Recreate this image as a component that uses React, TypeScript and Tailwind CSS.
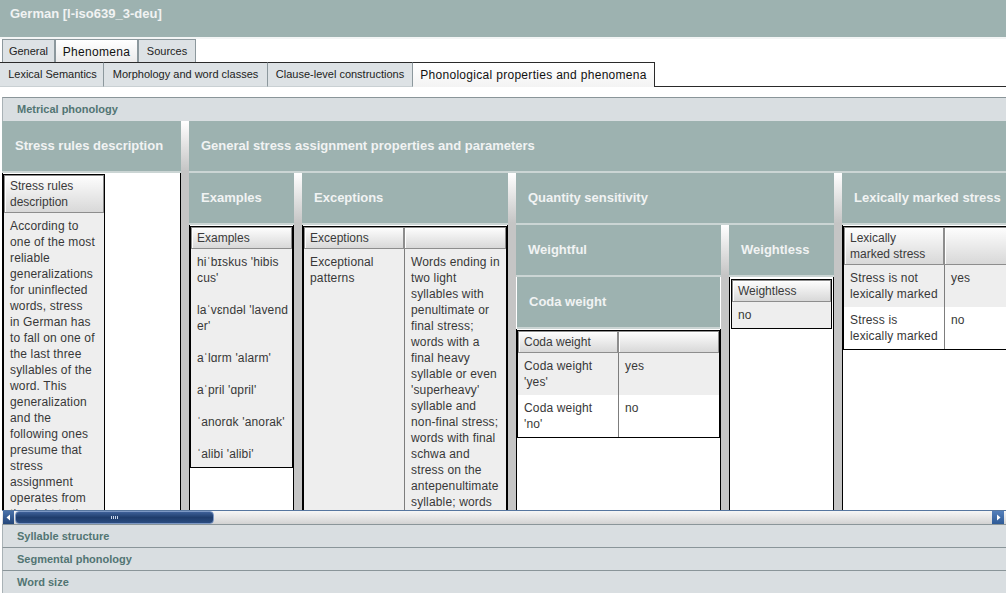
import type { ReactNode } from "react";
import clsx from "clsx";

type Lines = string[];

const stressText: Lines = [
  "According to",
  "one of the most",
  "reliable",
  "generalizations",
  "for uninflected",
  "words, stress",
  "in German has",
  "to fall on one of",
  "the last three",
  "syllables of the",
  "word. This",
  "generalization",
  "and the",
  "following ones",
  "presume that",
  "stress",
  "assignment",
  "operates from",
  "the right to the",
];

const examples: Lines = [
  "hiˈbɪskus 'hibis",
  "cus'",
  "",
  "laˈvɛndəl 'lavend",
  "er'",
  "",
  "aˈlɑrm 'alarm'",
  "",
  "aˈpril 'ɑpril'",
  "",
  "ˈanorɑk 'anorak'",
  "",
  "ˈalibi 'alibi'",
];

const exceptionText: Lines = [
  "Words ending in",
  "two light",
  "syllables with",
  "penultimate or",
  "final stress;",
  "words with a",
  "final heavy",
  "syllable or even",
  "'superheavy'",
  "syllable and",
  "non-final stress;",
  "words with final",
  "schwa and",
  "stress on the",
  "antepenultimate",
  "syllable; words",
];

const TextLines = ({ lines }: { lines: Lines }) => (
  <>
    {lines.map((l, i) => (
      <div key={i} className="h-[16px] leading-[16px] whitespace-nowrap">
        {l || "\u00a0"}
      </div>
    ))}
  </>
);

const TealHead = ({ children, className }: { children: ReactNode; className?: string }) => (
  <div
    className={clsx(
      "h-[52px] shrink-0 bg-[#9db2b0] border-b-2 border-[#cbd5d4] flex items-center pl-[12px] text-[13px] font-bold text-[#f1f3f3] whitespace-nowrap overflow-hidden",
      className
    )}
  >
    {children}
  </div>
);

const Splitter = () => (
  <div className="w-[8px] shrink-0 bg-[linear-gradient(to_bottom,#ffffff,#c5c5c5_50px,#c5c5c5)]" />
);

const Panel = ({ children }: { children?: ReactNode }) => (
  <div className="flex-1 min-h-0 overflow-hidden border-x border-black bg-white pt-[1px]">
    {children}
  </div>
);

const HeadCell = ({ lines, className }: { lines: Lines; className?: string }) => (
  <div
    className={clsx(
      "border border-[#8d8d8d] bg-[linear-gradient(#fdfdfd,#d8d8d8)] shadow-[inset_1px_1px_0_#ffffff] px-[5px] py-[2px] text-[#3a3a3a]",
      className
    )}
  >
    <TextLines lines={lines} />
  </div>
);

const BodyCell = ({ lines, className }: { lines: Lines; className?: string }) => (
  <div className={clsx("px-[6px] pt-[5px] pb-[5px] text-[#383838] tracking-[0.15px]", className)}>
    <TextLines lines={lines} />
  </div>
);

// two column table, first column 100px
const PairTable = ({ head, rows }: { head: Lines; rows: [Lines, Lines][] }) => (
  <div className="border border-black bg-white">
    <div className="grid grid-cols-[100px_1fr]">
      <HeadCell lines={head} />
      <HeadCell lines={[""]} />
    </div>
    {rows.map(([a, b], i) => (
      <div
        key={i}
        className={clsx("grid grid-cols-[100px_1fr]", i % 2 === 0 ? "bg-[#eeeeee]" : "bg-white")}
      >
        <BodyCell lines={a} />
        <BodyCell lines={b} className="border-l border-[#7d7d7d]" />
      </div>
    ))}
  </div>
);

const SingleTable = ({ head, body, className }: { head: Lines; body: Lines; className?: string }) => (
  <div className={clsx("border border-black bg-[#eeeeee]", className)}>
    <HeadCell lines={head} />
    <BodyCell lines={body} />
  </div>
);

const Tab = ({ children, selected, className }: { children: ReactNode; selected?: boolean; className: string }) => (
  <div
    className={clsx(
      "h-full flex items-center justify-center whitespace-nowrap border border-b-0 border-[#8c989d]",
      selected
        ? "bg-[linear-gradient(#ffffff,#ececec)] text-[12px] tracking-[0.3px] text-[#111] pt-[2px]"
        : "bg-[#dde2e5] text-[11px] text-[#222]",
      className
    )}
  >
    {children}
  </div>
);

const SubTab = ({ children, selected, className }: { children: ReactNode; selected?: boolean; className: string }) => (
  <div
    className={clsx(
      "h-full flex items-center justify-center whitespace-nowrap border-t border-t-[#2a2a2a]",
      selected
        ? "bg-[linear-gradient(#ffffff,#f3f3f3)] border-r border-r-[#2a2a2a] text-[12px] tracking-[0.3px] text-[#111]"
        : "bg-[#dde2e5] border-r border-r-[#8c989d] border-b border-b-[#c9d0d3] text-[11px] text-[#222]",
      className
    )}
  >
    {children}
  </div>
);

const AccordionHead = ({ children, className }: { children: ReactNode; className?: string }) => (
  <div
    className={clsx(
      "h-[23px] shrink-0 ml-[2px] border-t border-[#8a9599] border-l border-l-[#a9b2b6] bg-[#d9dee1] flex items-center pl-[14px] text-[11px] font-bold text-[#527573]",
      className
    )}
  >
    {children}
  </div>
);

export default function App() {
  return (
    <div className="w-[1006px] h-[593px] overflow-hidden bg-white flex flex-col font-['Liberation_Sans',Arial,sans-serif] text-[12px]">
      {/* title */}
      <div className="h-[37px] shrink-0 bg-[#9db2b0] pl-[10px] pt-[6px] text-[13px] leading-[16px] font-bold text-[#f1f3f3]">
        German [l-iso639_3-deu]
      </div>
      <div className="h-[2px] shrink-0 bg-[#f3f5f5]" />

      {/* top tabs */}
      <div className="h-[23px] shrink-0 flex pl-[2px]">
        <Tab className="w-[53px]">General</Tab>
        <Tab selected className="w-[83px]">Phenomena</Tab>
        <Tab className="w-[58px]">Sources</Tab>
      </div>

      {/* sub tabs */}
      <div className="h-[25px] shrink-0 flex">
        <SubTab className="w-[104px] pl-[2px]">Lexical Semantics</SubTab>
        <SubTab className="w-[164px]">Morphology and word classes</SubTab>
        <SubTab className="w-[145px]">Clause-level constructions</SubTab>
        <SubTab selected className="w-[242px]">Phonological properties and phenomena</SubTab>
        <div className="flex-1 border-b border-[#2a2a2a]" />
      </div>
      <div className="h-[10px] shrink-0" />

      <AccordionHead className="h-[24px]">Metrical phonology</AccordionHead>

      {/* metrical phonology content */}
      <div className="h-[389px] shrink-0 ml-[2px] flex overflow-hidden">
        <div className="w-[179px] shrink-0 flex flex-col">
          <TealHead className="pl-[13px]">Stress rules description</TealHead>
          <Panel>
            <SingleTable className="w-[102px]" head={["Stress rules", "description"]} body={stressText} />
          </Panel>
        </div>
        <Splitter />
        <div className="flex-1 min-w-0 flex flex-col overflow-hidden">
          <TealHead>General stress assignment properties and parameters</TealHead>
          <div className="flex-1 min-h-0 flex">
            <div className="w-[105px] shrink-0 flex flex-col">
              <TealHead>Examples</TealHead>
              <Panel>
                <SingleTable head={["Examples"]} body={examples} />
              </Panel>
            </div>
            <Splitter />
            <div className="w-[206px] shrink-0 flex flex-col">
              <TealHead className="pl-[11px]">Exceptions</TealHead>
              <Panel>
                <div className="border border-black bg-[#eeeeee]">
                  <div className="grid grid-cols-[100px_1fr]">
                    <HeadCell lines={["Exceptions"]} />
                    <HeadCell lines={[""]} />
                  </div>
                  <div className="grid grid-cols-[100px_1fr]">
                    <BodyCell lines={["Exceptional", "patterns"]} />
                    <BodyCell lines={exceptionText} className="border-l border-[#7d7d7d]" />
                  </div>
                </div>
              </Panel>
            </div>
            <Splitter />
            <div className="w-[318px] shrink-0 flex flex-col">
              <TealHead className="pl-[10px]">Quantity sensitivity</TealHead>
              <div className="flex-1 min-h-0 flex">
                <div className="w-[205px] shrink-0 flex flex-col">
                  <TealHead className="pl-[11px]">Weightful</TealHead>
                  <TealHead className="pl-[11px] mx-[1px]">Coda weight</TealHead>
                  <Panel>
                    <PairTable
                      head={["Coda weight"]}
                      rows={[
                        [["Coda weight", "'yes'"], ["yes"]],
                        [["Coda weight", "'no'"], ["no"]],
                      ]}
                    />
                  </Panel>
                </div>
                <Splitter />
                <div className="w-[105px] shrink-0 flex flex-col">
                  <TealHead>Weightless</TealHead>
                  <Panel>
                    <div className="mx-[1px] mt-[1px]">
                      <SingleTable head={["Weightless"]} body={["no"]} />
                    </div>
                  </Panel>
                </div>
              </div>
            </div>
            <Splitter />
            <div className="w-[206px] shrink-0 flex flex-col">
              <TealHead>Lexically marked stress</TealHead>
              <Panel>
                <PairTable
                  head={["Lexically", "marked stress"]}
                  rows={[
                    [["Stress is not", "lexically marked"], ["yes"]],
                    [["Stress is", "lexically marked"], ["no"]],
                  ]}
                />
              </Panel>
            </div>
          </div>
        </div>
      </div>

      {/* horizontal scrollbar */}
      <div className="h-[14px] shrink-0 ml-[2px] flex border-t border-[#56769f] bg-[linear-gradient(#f6f6f6,#e2e2e2_60%,#d2d2d2)]">
        <div className="ml-[1px] w-[11px] bg-[linear-gradient(#4a72aa,#23467a)] flex items-center justify-center">
          <svg width="5" height="7" viewBox="0 0 5 7">
            <path d="M4 0.5 L0.5 3.5 L4 6.5 Z" fill="#ffffff" />
          </svg>
        </div>
        <div className="ml-[1px] w-[199px] rounded-[4px] border border-[#7d98c4] bg-[linear-gradient(#3d6098,#1f3d6c_50%,#2b4c80)] flex items-center justify-center gap-[1px]">
          <span className="w-[1px] h-[3px] bg-[#c9d6ea]" />
          <span className="w-[1px] h-[3px] bg-[#c9d6ea]" />
          <span className="w-[1px] h-[3px] bg-[#c9d6ea]" />
          <span className="w-[1px] h-[3px] bg-[#c9d6ea]" />
        </div>
        <div className="flex-1" />
        <div className="w-[12px] mr-[2px] bg-[linear-gradient(#5580bb,#2e5a96)] flex items-center justify-center">
          <svg width="5" height="7" viewBox="0 0 5 7">
            <path d="M1 0.5 L4.5 3.5 L1 6.5 Z" fill="#ffffff" />
          </svg>
        </div>
      </div>

      <AccordionHead>Syllable structure</AccordionHead>
      <AccordionHead>Segmental phonology</AccordionHead>
      <AccordionHead>Word size</AccordionHead>
    </div>
  );
}
